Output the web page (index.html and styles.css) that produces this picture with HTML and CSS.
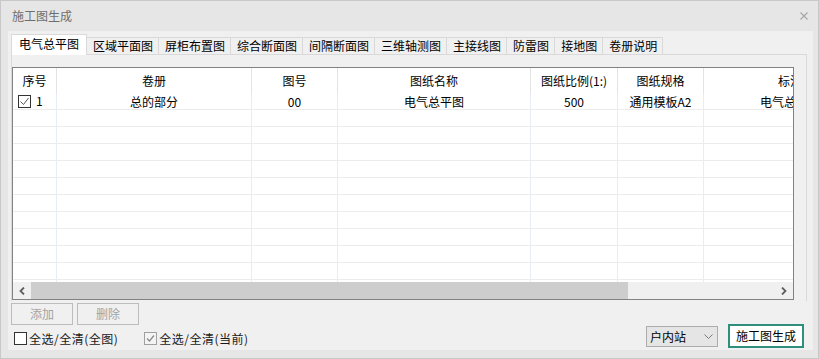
FILE: index.html
```html
<!DOCTYPE html>
<html>
<head>
  <meta charset="utf-8">
  <title>施工图生成</title>
  <link rel="stylesheet" href="styles.css">
</head>
<body>
  <div class="dialog">
    <div class="titlebar">
      <span class="title">施工图生成</span>
      <svg class="close" width="8" height="8" viewBox="0 0 8 8">
        <path d="M0.5 0.5 L7.5 7.5 M7.5 0.5 L0.5 7.5" stroke="#a6a6a6" stroke-width="1.1" fill="none"/>
      </svg>
    </div>

    <div class="frame">
      <div class="content">
        <div class="tabs">
          <div class="tab active">电气总平图</div>
          <div class="tab">区域平面图</div>
          <div class="tab">屏柜布置图</div>
          <div class="tab">综合断面图</div>
          <div class="tab">间隔断面图</div>
          <div class="tab">三维轴测图</div>
          <div class="tab">主接线图</div>
          <div class="tab">防雷图</div>
          <div class="tab">接地图</div>
          <div class="tab">卷册说明</div>
        </div>

        <div class="panel">
          <div class="grid">
            <div class="grid-view">
              <div class="row head">
                <div class="cell c1">序号</div>
                <div class="cell c2">卷册</div>
                <div class="cell c3">图号</div>
                <div class="cell c4">图纸名称</div>
                <div class="cell c5">图纸比例(1:)</div>
                <div class="cell c6">图纸规格</div>
                <div class="cell c7">标注</div>
              </div>
              <div class="row">
                <div class="cell c1 left">
                  <span class="box">
                    <svg width="11" height="11" viewBox="0 0 11 11">
                      <path d="M1.5 5.5 L4.5 8.5 L9.5 2" stroke="#5a5a5a" stroke-width="1" fill="none"/>
                    </svg>
                  </span>
                  <span>1</span>
                </div>
                <div class="cell c2">总的部分</div>
                <div class="cell c3">00</div>
                <div class="cell c4">电气总平图</div>
                <div class="cell c5">500</div>
                <div class="cell c6">通用模板A2</div>
                <div class="cell c7">电气总平图</div>
              </div>
              <div class="row"><div class="cell c1"></div><div class="cell c2"></div><div class="cell c3"></div><div class="cell c4"></div><div class="cell c5"></div><div class="cell c6"></div><div class="cell c7"></div></div>
              <div class="row"><div class="cell c1"></div><div class="cell c2"></div><div class="cell c3"></div><div class="cell c4"></div><div class="cell c5"></div><div class="cell c6"></div><div class="cell c7"></div></div>
              <div class="row"><div class="cell c1"></div><div class="cell c2"></div><div class="cell c3"></div><div class="cell c4"></div><div class="cell c5"></div><div class="cell c6"></div><div class="cell c7"></div></div>
              <div class="row"><div class="cell c1"></div><div class="cell c2"></div><div class="cell c3"></div><div class="cell c4"></div><div class="cell c5"></div><div class="cell c6"></div><div class="cell c7"></div></div>
              <div class="row"><div class="cell c1"></div><div class="cell c2"></div><div class="cell c3"></div><div class="cell c4"></div><div class="cell c5"></div><div class="cell c6"></div><div class="cell c7"></div></div>
              <div class="row"><div class="cell c1"></div><div class="cell c2"></div><div class="cell c3"></div><div class="cell c4"></div><div class="cell c5"></div><div class="cell c6"></div><div class="cell c7"></div></div>
              <div class="row"><div class="cell c1"></div><div class="cell c2"></div><div class="cell c3"></div><div class="cell c4"></div><div class="cell c5"></div><div class="cell c6"></div><div class="cell c7"></div></div>
              <div class="row"><div class="cell c1"></div><div class="cell c2"></div><div class="cell c3"></div><div class="cell c4"></div><div class="cell c5"></div><div class="cell c6"></div><div class="cell c7"></div></div>
              <div class="row"><div class="cell c1"></div><div class="cell c2"></div><div class="cell c3"></div><div class="cell c4"></div><div class="cell c5"></div><div class="cell c6"></div><div class="cell c7"></div></div>
              <div class="row"><div class="cell c1"></div><div class="cell c2"></div><div class="cell c3"></div><div class="cell c4"></div><div class="cell c5"></div><div class="cell c6"></div><div class="cell c7"></div></div>
              <div class="row"><div class="cell c1"></div><div class="cell c2"></div><div class="cell c3"></div><div class="cell c4"></div><div class="cell c5"></div><div class="cell c6"></div><div class="cell c7"></div></div>
            </div>

            <div class="hscroll">
              <div class="arrow">
                <svg width="6" height="8" viewBox="0 0 6 8"><path d="M5 0.5 L1.5 4 L5 7.5" stroke="#5f5f5f" stroke-width="1.8" fill="none"/></svg>
              </div>
              <div class="thumb"></div>
              <div class="track"></div>
              <div class="arrow">
                <svg width="6" height="8" viewBox="0 0 6 8"><path d="M1 0.5 L4.5 4 L1 7.5" stroke="#5f5f5f" stroke-width="1.8" fill="none"/></svg>
              </div>
            </div>
          </div>
        </div>

        <div class="actions">
          <button class="btn" disabled>添加</button>
          <button class="btn" disabled>删除</button>
        </div>

        <div class="footer">
          <label class="check">
            <span class="box"></span>
            <span>全选/全清(全图)</span>
          </label>
          <label class="check second">
            <span class="box disabled">
              <svg width="11" height="11" viewBox="0 0 11 11">
                <path d="M2 5.5 L4.5 8 L9 2.5" stroke="#8a8a8a" stroke-width="1.3" fill="none"/>
              </svg>
            </span>
            <span>全选/全清(当前)</span>
          </label>

          <div class="select">
            <span>户内站</span>
            <svg width="9" height="5" viewBox="0 0 9 5"><path d="M0.5 0.5 L4.5 4.5 L8.5 0.5" stroke="#7a7a7a" stroke-width="1" fill="none"/></svg>
          </div>
          <button class="btn primary">施工图生成</button>
        </div>
      </div>
    </div>
  </div>
</body>
</html>
```

FILE: styles.css
```css
html, body {
  margin: 0;
  padding: 0;
  background: #e6e6e6;
  font-family: "Noto Sans CJK SC", "Microsoft YaHei", sans-serif;
  font-size: 12px;
  color: #000;
}

.dialog {
  width: 819px;
  height: 359px;
  box-sizing: border-box;
  border: 1px solid #c8c8c8;
  background: #e6e6e6;
  overflow: hidden;
}

.titlebar {
  height: 30px;
  display: flex;
  align-items: center;
  justify-content: space-between;
  padding: 0 10px 0 11px;
}

.title {
  color: #6e6e6e;
  line-height: 16px;
}

.close {
  margin-top: -1px;
}

.frame {
  padding: 0 5px 0 7px;
}

.content {
  height: 319px;
  background: #f0f0f0;
  display: flex;
  flex-direction: column;
}

/* tabs */
.tabs {
  height: 23px;
  display: flex;
  align-items: flex-end;
  padding-left: 4px;
  position: relative;
  z-index: 1;
}

.tab {
  height: 17px;
  box-sizing: border-box;
  line-height: 16px;
  padding: 0 5px 0 6px;
  border-top: 1px solid #d9d9d9;
  border-right: 1px solid #d9d9d9;
  background: #f0f0f0;
  white-space: nowrap;
}

.tab.active {
  height: 21px;
  line-height: 17px;
  padding: 0 7px 0 7px;
  margin: 0 -2px -1px -1px;
  border-left: 1px solid #d9d9d9;
  background: #fff;
  position: relative;
  z-index: 2;
}

.tab.active + .tab {
  padding-left: 8px;
}

.panel {
  margin-left: 3px;
  width: 796px;
  box-sizing: border-box;
  border-top: 1px solid #d9d9d9;
  border-left: 1px solid #d9d9d9;
  border-right: 1px solid #d9d9d9;
  padding: 12px 12px 1px 0;
}

/* grid */
.grid {
  border: 1px solid #828282;
  background: #fff;
  width: 782px;
  box-sizing: border-box;
}

.grid-view {
  height: 214px;
  overflow: hidden;
}

.row {
  display: flex;
  height: 17px;
  box-sizing: border-box;
  border-bottom: 1px solid #ececec;
}

.row.head {
  height: 25px;
  border-bottom: none;
}

.cell {
  flex: none;
  box-sizing: border-box;
  border-right: 1px solid #e6edf8;
  text-align: center;
  line-height: 16px;
  padding-top: 1px;
  white-space: nowrap;
  overflow: hidden;
}

.row.head .cell {
  line-height: 24px;
  border-right-color: #e3e3e3;
}

.cell.left {
  text-align: left;
  display: flex;
  align-items: center;
  gap: 5px;
  padding: 0 0 0 5px;
}

.c1 { width: 44px; }
.c2 { width: 195px; }
.c3 { width: 86px; }
.c4 { width: 193px; }
.c5 { width: 87px; }
.c6 { width: 86px; }
.c7 { width: 172px; border-right: none; }

.box {
  width: 13px;
  height: 13px;
  box-sizing: border-box;
  border: 1px solid #333;
  background: #fff;
  display: inline-flex;
  align-items: center;
  justify-content: center;
  flex: none;
}

.box.disabled {
  border-color: #a0a0a0;
  background: #f4f4f4;
}

/* scrollbar */
.hscroll {
  height: 17px;
  display: flex;
  background: #f0f0f0;
}

.arrow {
  width: 18px;
  display: flex;
  align-items: center;
  justify-content: center;
}

.thumb {
  width: 597px;
  background: #cdcdcd;
}

.track {
  flex: 1;
}

/* buttons */
.actions {
  display: flex;
  gap: 4px;
  padding-left: 3px;
  margin-top: 2px;
}

.btn {
  font-family: inherit;
  font-size: 12px;
  height: 22px;
  width: 62px;
  padding: 0;
  border: 1px solid #bcbcbc;
  background: #f0f0f0;
  color: #a3a3a3;
  line-height: 18px;
}

.footer {
  display: flex;
  height: 24px;
  padding: 0 9px 0 6px;
}

.check {
  display: flex;
  align-items: center;
  gap: 2px;
  height: 13px;
  margin-top: 7px;
  line-height: 13px;
  color: #1a1a1a;
}

.check span:last-child {
  letter-spacing: 0.5px;
}

.check.second {
  margin-left: 26px;
}

.select {
  margin-left: auto;
  margin-top: 1px;
  width: 72px;
  height: 21px;
  box-sizing: border-box;
  border: 1px solid #acacac;
  background: #e5e5e5;
  display: flex;
  align-items: center;
  justify-content: space-between;
  padding: 0 4px 0 3px;
  line-height: 18px;
}

.btn.primary {
  margin-left: 10px;
  margin-top: -1px;
  width: 76px;
  height: 24px;
  border: 2px solid #2f8f7d;
  background: #fff;
  color: #000;
}
```
